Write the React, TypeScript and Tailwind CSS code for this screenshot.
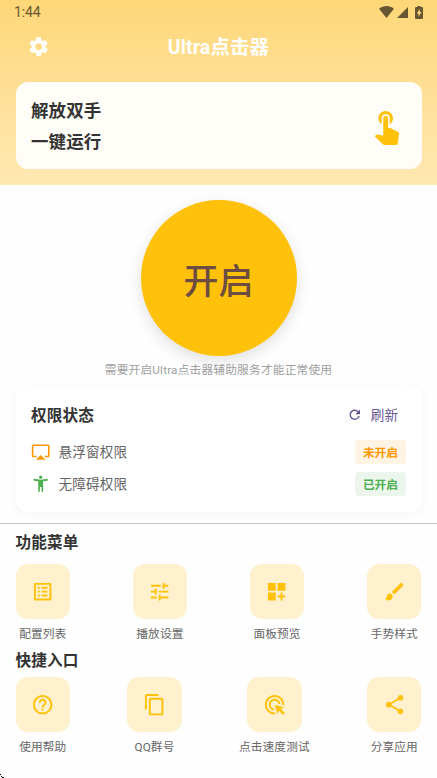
import React from "react";
import type { IconType } from "react-icons";
import {
  MdAccessibilityNew,
  MdAdsClick,
  MdBrush,
  MdContentCopy,
  MdDashboardCustomize,
  MdHelpOutline,
  MdListAlt,
  MdOutlineAirplay,
  MdRefresh,
  MdSettings,
  MdShare,
  MdTouchApp,
  MdTune,
} from "react-icons/md";

interface MenuItem {
  label: string;
  icon: IconType;
}

const functionMenu: MenuItem[] = [
  { label: "配置列表", icon: MdListAlt },
  { label: "播放设置", icon: MdTune },
  { label: "面板预览", icon: MdDashboardCustomize },
  { label: "手势样式", icon: MdBrush },
];

const shortcuts: MenuItem[] = [
  { label: "使用帮助", icon: MdHelpOutline },
  { label: "QQ群号", icon: MdContentCopy },
  { label: "点击速度测试", icon: MdAdsClick },
  { label: "分享应用", icon: MdShare },
];

const StatusBar: React.FC = () => (
  <div className="flex h-6 items-center justify-between pl-3.5 pr-[14px] text-[#675731]">
    <span className="text-[14px] font-normal leading-6 tracking-[-0.1px]">1:44</span>
    <div className="flex items-center">
      <svg className="h-3 w-[15px]" viewBox="0 0 15 12" fill="currentColor">
        <path d="M0 2.8C4.2-.9 10.8-.9 15 2.8L7.5 12z" />
      </svg>
      <svg className="ml-[3px] h-[11px] w-[11px]" viewBox="0 0 11 11" fill="currentColor">
        <path d="M11 0v11H0z" />
      </svg>
      <svg className="ml-[7px] h-[13px] w-2" viewBox="0 0 8 13" fill="currentColor" fillRule="evenodd">
        <path d="M2.5 0h3v1H7q1 0 1 1v10q0 1-1 1H1q-1 0-1-1V2q0-1 1-1h1.5zM4.8 3L1.8 7.5h1.7v3.2l3-4.7H4.800z" />
      </svg>
    </div>
  </div>
);

const MenuRow: React.FC<{ items: MenuItem[] }> = ({ items }) => (
  <div className="flex items-start justify-between">
    {items.map(({ label, icon: Icon }) => (
      <button key={label} className="flex flex-col items-center">
        <span className="flex h-[54.5px] w-[54.5px] items-center justify-center rounded-[12px] bg-[#fff1cd] text-[#ffc10a]">
          <Icon size={23.3} />
        </span>
        <span className="mt-[7px] h-[17px] whitespace-nowrap text-[11.7px] leading-[17px] tracking-[0.1px] text-[#666666]">
          {label}
        </span>
      </button>
    ))}
  </div>
);

const App: React.FC = () => {
  return (
    <div className="relative h-[778px] w-full overflow-hidden bg-[#fefefe] font-['Roboto','Noto_Sans_CJK_SC',sans-serif] text-[#333333]">
      <header className="h-[185px] bg-linear-to-b from-[#ffd778] to-[#ffe8b3]">
        <StatusBar />
        <div className="grid h-[46px] grid-cols-[62px_1fr_62px] items-center text-white">
          <button className="ml-[27px]">
            <MdSettings size={23.3} />
          </button>
          <h1 className="pt-0.5 text-center text-[19.4px] font-bold leading-7 tracking-[0.2px]">Ultra点击器</h1>
        </div>
        <div className="mx-[15.5px] mt-[12px] flex h-[87px] items-center justify-between rounded-[12px] bg-[#fffdf7] pl-[15.5px] pr-[16px]">
          <div className="pt-0.5 text-[17.5px] font-bold leading-[31px] tracking-[0.1px]">
            <p>解放双手</p>
            <p>一键运行</p>
          </div>
          <MdTouchApp size={39} className="text-[#ffc10a]" />
        </div>
      </header>

      <section className="flex flex-col items-center pt-[15px]">
        <button className="h-[156px] w-[156px] rounded-full bg-[#ffc10a] pt-[11px] text-[35px] font-medium text-[#6d4c41] shadow-[0_5px_15px_rgba(0,0,0,0.12)]">
          开启
        </button>
        <p className="mt-[5px] text-[11.7px] leading-[18px] tracking-[0.2px] text-[#9e9e9e]">需要开启Ultra点击器辅助服务才能正常使用</p>
      </section>

      <section className="mx-[15.5px] mt-[6px] h-[127px] rounded-[12px] bg-white px-[15.5px] pt-[16px] shadow-[0_2px_10px_rgba(0,0,0,0.04)]">
        <div className="flex h-7 items-center justify-between">
          <h2 className="pt-1 text-[15.6px] font-bold tracking-[0.15px]">权限状态</h2>
          <button className="flex items-center gap-2 pr-2 text-[13.6px] text-[#65558f]">
            <MdRefresh size={15.6} />
            刷新
          </button>
        </div>
        <div className="mt-[11px] flex h-6 items-center">
          <MdOutlineAirplay size={19.4} className="text-[#ff9800]" />
          <span className="ml-2 text-[13.6px] tracking-[0.2px] text-[#666666]">悬浮窗权限</span>
          <span className="ml-auto h-6 rounded-[4px] bg-[#fff3e3] px-2 pt-px text-[11.7px] font-bold leading-6 text-[#ff9800]">未开启</span>
        </div>
        <div className="mt-2 flex h-6 items-center">
          <MdAccessibilityNew size={19.4} className="text-[#4caf50]" />
          <span className="ml-2 text-[13.6px] tracking-[0.2px] text-[#666666]">无障碍权限</span>
          <span className="ml-auto h-6 rounded-[4px] bg-[#ecf6ed] px-2 pt-px text-[11.7px] font-bold leading-6 text-[#4caf50]">已开启</span>
        </div>
      </section>

      <hr className="mt-[11px] border-t border-[#cac4d0]" />

      <main className="px-[15.5px] pt-[7px]">
        <h2 className="mb-[9px] text-[15.6px] font-bold leading-6 tracking-[0.15px]">功能菜单</h2>
        <MenuRow items={functionMenu} />
        <h2 className="mb-[4px] mt-[6.5px] text-[15.6px] font-bold leading-6 tracking-[0.15px]">快捷入口</h2>
        <MenuRow items={shortcuts} />
      </main>

      <svg className="absolute bottom-0 left-0 h-1 w-1" viewBox="0 0 4 4" shapeRendering="crispEdges">
        <path d="M0 0h1v1H0zM1 2h1v1H1zM2 3h2v1H2z" fill="#000" />
      </svg>
    </div>
  );
};

export default App;
